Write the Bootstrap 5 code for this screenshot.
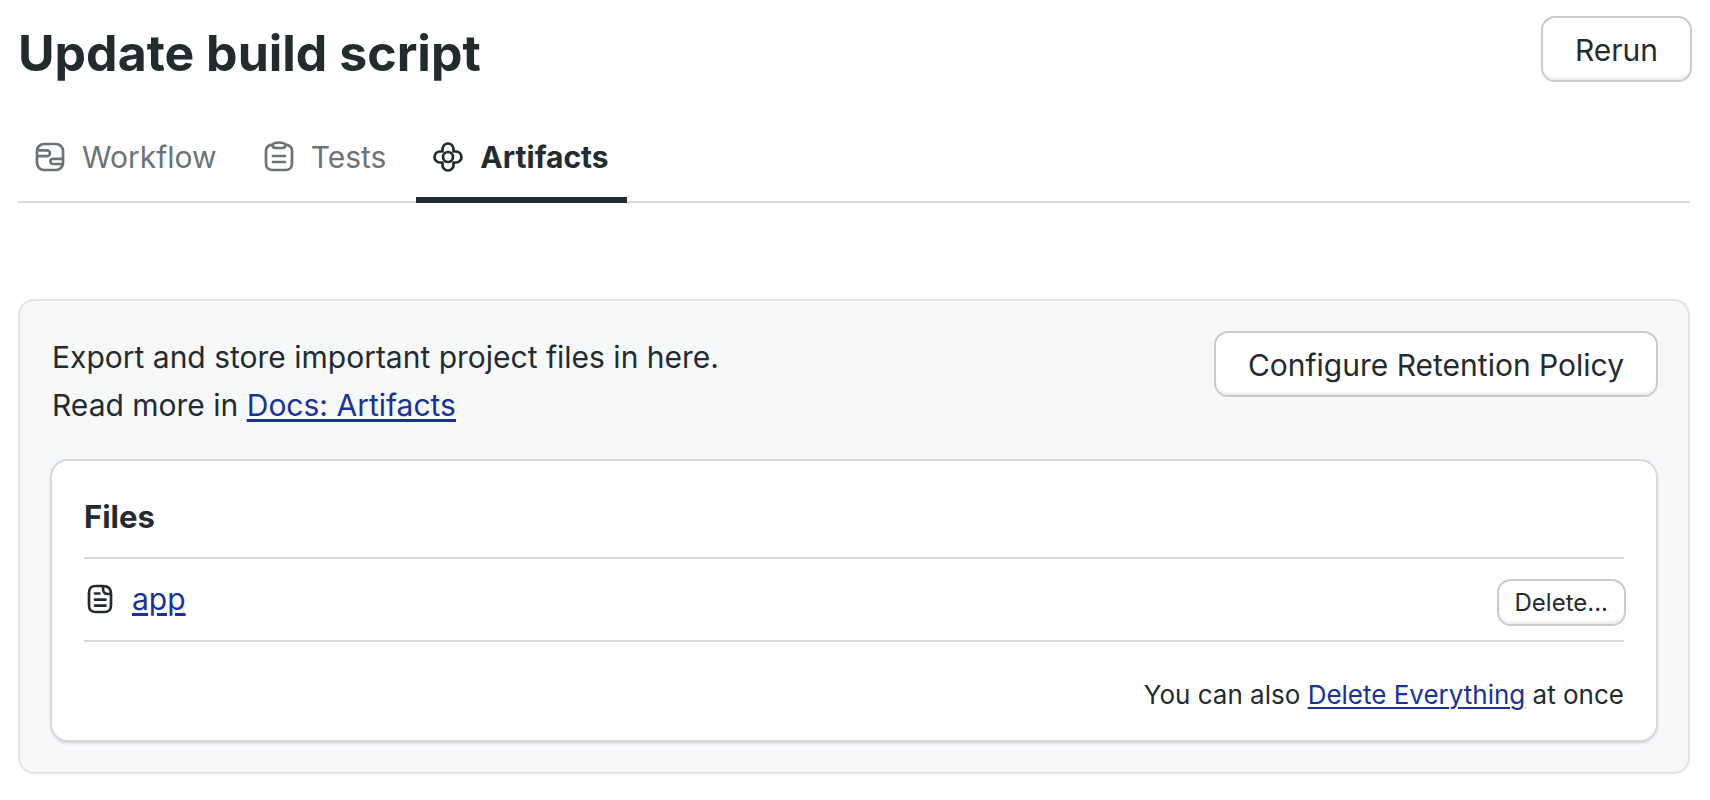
<!DOCTYPE html>
<html lang="en">
<head>
<meta charset="utf-8">
<meta name="viewport" content="width=device-width, initial-scale=1">
<title>Update build script</title>
<link href="https://cdn.jsdelivr.net/npm/bootstrap@5.3.0/dist/css/bootstrap.min.css" rel="stylesheet">
<style>
  :root { --ink: #232b2f; --muted-ink: #6b7377; --link: #19329a; --rule: #d5d9dc; }
  body { font-family: Inter, "Liberation Sans", sans-serif; font-size: 30px; line-height: 48px; color: var(--ink); background: #fff; }
  .page { padding: 18px 20px 26px 18px; }
  h1 { font-size: 50px; line-height: 70px; font-weight: 700; }
  h2 { font-size: 31px; line-height: 48px; font-weight: 700; }
  a { color: var(--link); text-decoration-thickness: 3px; text-underline-offset: 3px; }
  .icon { width: 32px; height: 32px; flex: none; fill: none; stroke: currentColor; stroke-width: 2.7; stroke-linecap: round; stroke-linejoin: round; }

  .btn-plain { --bs-btn-font-size: 30px; --bs-btn-line-height: 44px; --bs-btn-padding-x: 32px; --bs-btn-border-width: 0; --bs-btn-border-radius: 12px;
    --bs-btn-color: var(--ink); --bs-btn-bg: #fff; --bs-btn-hover-color: var(--ink); --bs-btn-hover-bg: #f7f8fa;
    padding-top: 10px; padding-bottom: 8px;
    box-shadow: 0 0 0 2px #c9cbcd, inset 0 -3px 3px -1px #e8e9ea; }
  .btn-plain.btn-compact { --bs-btn-font-size: 24px; --bs-btn-line-height: 36px; --bs-btn-padding-x: 16px; padding-top: 4px; padding-bottom: 3px; }

  .tabs { margin-top: 29px; gap: 14px; border-bottom: 2px solid var(--rule); }
  .tabs .nav-link { color: var(--muted-ink); padding: 16px 16px; margin-bottom: -2px; border-bottom: 6px solid transparent; }
  .tabs .nav-link.active { color: var(--ink); font-weight: 700; border-bottom-color: var(--ink); padding-right: 18px; }

  .panel { margin-top: 96px; padding: 32px; background: #f7f8fa; border: 2px solid #e2e4e6; border-radius: 16px; }
  .files { margin-top: 32px; padding: 32px 32px 25px; background: #fff; border-radius: 16px; box-shadow: 0 0 0 2px #d7dadd, 0 2px 3px 1px #c9ccce; }
  .file-list { margin-top: 16px; }
  .file-row { padding: 16px 0; border-top: 2px solid var(--rule); }
  .file-list .file-row:last-child { border-bottom: 2px solid var(--rule); }
  .file-row .btn-compact { margin-top: 6px; }
  .footnote { margin-top: 33px; font-size: 26px; line-height: 40px; }
  .footnote a { text-decoration-thickness: 2px; }
</style>
</head>
<body>
<main class="page">
  <header class="d-flex justify-content-between align-items-start">
    <h1 class="mb-0">Update build script</h1>
    <button type="button" class="btn btn-plain">Rerun</button>
  </header>

  <nav class="nav tabs" aria-label="Build sections">
    <a class="nav-link d-flex align-items-center gap-3" href="#workflow">
      <svg class="icon" viewBox="0 0 32 32" aria-hidden="true"><rect x="3" y="3" width="26" height="26" rx="7"/><path d="M3.500 8.500L5 9.300h8a2.900 2.900 0 0 1 0 5.800H3.500M28.500 17.800H19a2.600 2.600 0 0 0 0 5.200h8l1.500 .8"/></svg>
      Workflow
    </a>
    <a class="nav-link d-flex align-items-center gap-3" href="#tests">
      <svg class="icon" viewBox="0 0 32 32" aria-hidden="true"><path d="M9.500 3.600C5 4.200 3 6 3 10v12c0 5 2 7 7 7h12c5 0 7-2 7-7V10c0-4-2-5.800-6.500-6.400M9.500 3.600C11.500 .8 20.500 .8 22.500 3.600c0 2.200-1 3.400-3 3.400h-7c-2 0-3-1.200-3-3.400zM10 15h12M10 21h12"/></svg>
      Tests
    </a>
    <a class="nav-link active d-flex align-items-center gap-3" href="#artifacts" aria-current="page">
      <svg class="icon" viewBox="0 0 32 32" aria-hidden="true"><circle cx="16" cy="16" r="5"/><path d="M10.500 10.500V8a5.500 5.500 0 0 1 11 0v2.500H24a5.500 5.500 0 0 1 0 11h-2.500V24a5.500 5.500 0 0 1-11 0v-2.500H8a5.500 5.500 0 0 1 0-11z"/></svg>
      Artifacts
    </a>
  </nav>

  <section class="panel">
    <div class="d-flex justify-content-between align-items-start">
      <p class="mb-0">Export and store important project files in here.<br>Read more in <a href="#docs">Docs: Artifacts</a></p>
      <button type="button" class="btn btn-plain">Configure Retention Policy</button>
    </div>

    <div class="files">
      <h2 class="mb-0">Files</h2>
      <ul class="file-list list-unstyled mb-0">
        <li class="file-row d-flex justify-content-between align-items-start">
          <span class="d-flex align-items-center gap-3">
            <svg class="icon" viewBox="0 0 32 32" aria-hidden="true"><path d="M19 3h-7c-5 0-7 2-7 7v12c0 5 2 7 7 7h8c5 0 7-2 7-7V11M19 3c5 0 8 2.500 8 8M19 3v2.500C19 9.500 20.500 11 24.500 11H27M11 10.500h4.500M11 16.700h10.500M11 22.700h10.500"/></svg>
            <a href="#app">app</a>
          </span>
          <button type="button" class="btn btn-plain btn-compact">Delete...</button>
        </li>
      </ul>
      <p class="footnote mb-0 text-end">You can also <a href="#delete-all">Delete Everything</a> at once</p>
    </div>
  </section>
</main>
<script src="https://cdn.jsdelivr.net/npm/bootstrap@5.3.0/dist/js/bootstrap.bundle.min.js"></script>
</body>
</html>
